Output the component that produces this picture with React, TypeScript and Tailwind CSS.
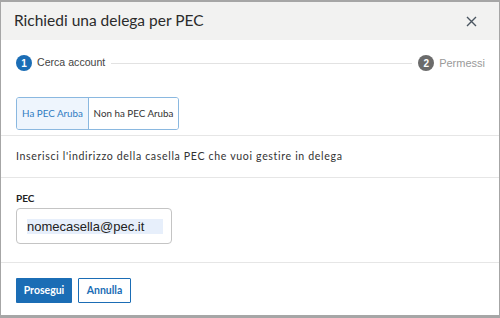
import React from "react";

export default function App() {
  return (
    <div className="w-[500px] h-[318px] overflow-hidden bg-[#a6a6a6] pt-[2px] px-[1px]" style={{ fontFamily: "Lato, 'Liberation Sans', sans-serif" }}>
      <div className="h-[313px] bg-white flex flex-col">
        <div className="h-[38px] shrink-0 bg-[#f2f2f1] flex items-center justify-between pl-[13px] pr-[22px]">
          <span className="text-[15.5px] text-[#2b2b2b] leading-none">Richiedi una delega per PEC</span>
          <svg width="11" height="11" viewBox="0 0 11 11" fill="none">
            <path d="M1 1L10 10M10 1L1 10" stroke="#4a5560" strokeWidth="1.4" />
          </svg>
        </div>
        <div className="flex items-center pl-[15px] pr-[14px] pt-[15px] h-[31px]">
          <span className="w-[16px] h-[16px] rounded-full bg-[#1b6db5] text-white text-[10px] font-bold flex items-center justify-center" style={{ fontFamily: "'Liberation Sans', sans-serif" }}>1</span>
          <span className="ml-[5px] text-[10.6px] text-[#444]" style={{ fontFamily: "'Liberation Sans', sans-serif" }}>Cerca account</span>
          <div className="flex-1 h-px bg-[#e2e2e2] mx-[6px]"></div>
          <span className="w-[16px] h-[16px] rounded-full bg-[#6b6b6b] text-white text-[10px] font-bold flex items-center justify-center" style={{ fontFamily: "'Liberation Sans', sans-serif" }}>2</span>
          <span className="ml-[5px] text-[11px] text-[#9a9a9a]" style={{ fontFamily: "'Liberation Sans', sans-serif" }}>Permessi</span>
        </div>
        <div className="pl-[15px] pt-[26px] pb-[5px] flex">
          <div className="flex h-[33px] border border-[#8ab8e0] rounded-[3px] overflow-hidden text-[9.8px]">
            <div className="w-[72px] bg-[#eef5fd] text-[#2f7cc2] flex items-center justify-center border-r border-[#8ab8e0]">Ha PEC Aruba</div>
            <div className="w-[89px] bg-white text-[#333] flex items-center justify-center">Non ha PEC Aruba</div>
          </div>
        </div>
        <div className="h-[43px] border-y border-[#e6e6e6] flex items-center pl-[15px] text-[10.6px] tracking-[0.65px] text-[#333]">
          Inserisci l'indirizzo della casella PEC che vuoi gestire in delega
        </div>
        <div className="pl-[15px] pt-[15px] pb-[18px] border-b border-[#e6e6e6]">
          <div className="text-[10px] font-bold text-[#222] leading-none">PEC</div>
          <div className="mt-[5px] w-[156px] h-[36px] border border-[#c4c4c4] rounded-[4px] flex items-center pl-[10px]">
            <span className="w-[136px] h-[15px] bg-[#e7effb] text-[13px] text-[#222] leading-[15px]" style={{ fontFamily: "'Liberation Sans', sans-serif" }}>nomecasella@pec.it</span>
          </div>
        </div>
        <div className="flex gap-[6px] pl-[15px] pt-[15px]">
          <div className="w-[56px] h-[25px] bg-[#1b6db5] text-white text-[10.5px] font-bold flex items-center justify-center rounded-[1px]">Prosegui</div>
          <div className="w-[53px] h-[25px] bg-white border border-[#1b6db5] text-[#1b6db5] text-[10.5px] font-bold flex items-center justify-center rounded-[1px]">Annulla</div>
        </div>
      </div>
    </div>
  );
}
